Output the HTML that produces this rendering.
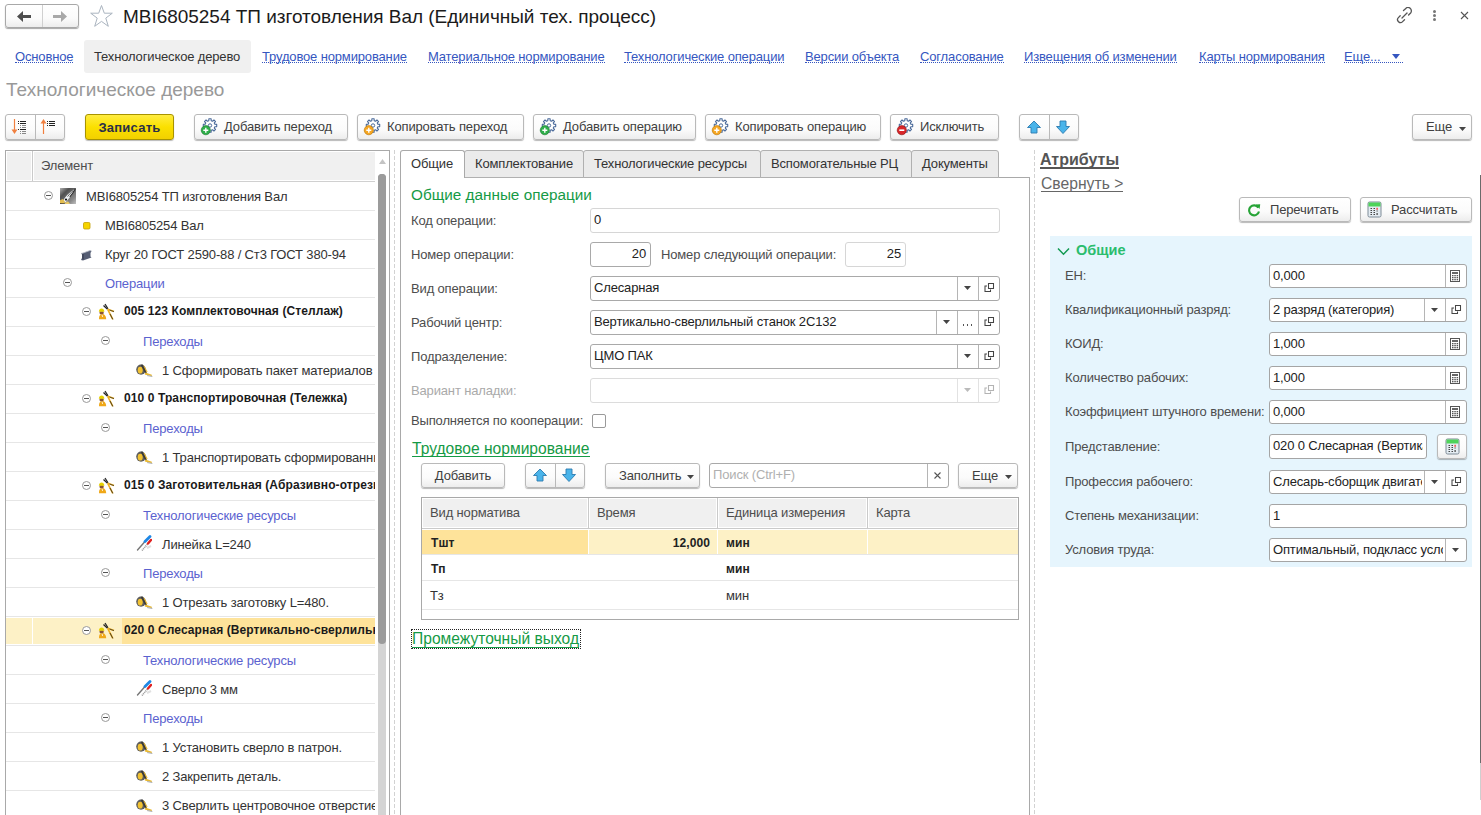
<!DOCTYPE html>
<html><head><meta charset="utf-8">
<style>
*{box-sizing:border-box;margin:0;padding:0}
html,body{width:1481px;height:815px;overflow:hidden;background:#fff}
body{position:relative;font-family:"Liberation Sans",sans-serif;font-size:13px;color:#333;letter-spacing:-0.15px}
.a{position:absolute;white-space:nowrap}
.t{position:absolute;white-space:nowrap;line-height:15px}
.btn{position:absolute;border:1px solid #b9b9b9;border-radius:3px;background:linear-gradient(#ffffff 0%,#fbfbfb 60%,#ededed 100%);box-shadow:0 1px 1px rgba(0,0,0,.28);color:#404040;white-space:nowrap;line-height:24px;height:26px}
.lnk{position:absolute;white-space:nowrap;color:#3556c0;line-height:15px}
.lnk:after{content:"";position:absolute;left:0;right:0;top:13px;border-bottom:1px dotted #3556c0}
.inp{position:absolute;border:1px solid #a9a9a9;border-radius:3px;background:#fff;height:25px;line-height:21px;padding-left:3px;color:#222;white-space:nowrap;overflow:hidden}
.inpl{border-color:#d6d6d6}
.lbl{position:absolute;white-space:nowrap;color:#4d4d4d;line-height:15px}
.sep{position:absolute;top:0;bottom:0;width:1px;background:#a9a9a9}
.row{position:absolute;left:0;width:369px;height:29px;border-bottom:1px solid #e6e6e6}
.tt{position:absolute;white-space:nowrap;line-height:15px;top:7px;color:#333}
.grp{color:#5b62cf}
.b{font-weight:bold;font-size:12px;letter-spacing:0.1px;color:#1a1a1a}
.circ{position:absolute;width:9px;height:9px;border:1px solid #9a9a9a;border-radius:50%;top:9px;background:#fff}
.circ:after{content:"";position:absolute;left:1px;top:3px;width:5px;height:1px;background:#555}
</style></head><body>

<!-- ===== HEADER ===== -->
<div class="btn" style="left:5px;top:4px;width:74px;height:24px;box-shadow:0 1px 1px rgba(0,0,0,.35);border-color:#a8a8a8"></div>
<div class="a" style="left:42px;top:5px;width:1px;height:22px;background:#d0d0d0"></div>
<svg class="a" style="left:17px;top:11px" width="15" height="11" viewBox="0 0 15 11"><path d="M0 5.5 L6 0 L6 4 L14 4 L14 7 L6 7 L6 11 Z" fill="#4d4d4d"/></svg>
<svg class="a" style="left:53px;top:11px" width="15" height="11" viewBox="0 0 15 11"><path d="M14 5.5 L8 0 L8 4 L0 4 L0 7 L8 7 L8 11 Z" fill="#a8a8a8"/></svg>
<svg class="a" style="left:89px;top:4px" width="25" height="24" viewBox="0 0 25 24"><path d="M12.5 1.5 L15.3 9.2 L23.3 9.2 L16.8 14.1 L19.3 22.3 L12.5 17.4 L5.7 22.3 L8.2 14.1 L1.7 9.2 L9.7 9.2 Z" fill="none" stroke="#aab4bf" stroke-width="1"/></svg>
<div class="a" style="left:123px;top:6px;font-size:19px;line-height:22px;letter-spacing:-0.03px;color:#1b1b1b">MBI6805254 ТП изготовления Вал (Единичный тех. процесс)</div>

<svg class="a" style="left:1396px;top:7px" width="17" height="17" viewBox="0 0 17 17"><g fill="none" stroke="#555" stroke-width="1.3" stroke-linecap="round"><path d="M7.5 3.5 L9.5 1.8 A2.9 2.9 0 0 1 14.6 6 L12.6 8"/><path d="M4.2 8.8 L2.4 10.6 A2.9 2.9 0 0 0 6.6 14.6 L8.5 12.8"/><path d="M6 11 L11 6"/></g></svg>
<div class="a" style="left:1433px;top:10px;width:3px;height:3px;border-radius:50%;background:#777"></div>
<div class="a" style="left:1433px;top:14px;width:3px;height:3px;border-radius:50%;background:#777"></div>
<div class="a" style="left:1433px;top:18px;width:3px;height:3px;border-radius:50%;background:#777"></div>
<svg class="a" style="left:1460px;top:11px" width="9" height="9" viewBox="0 0 9 9"><path d="M1 1 L8 8 M8 1 L1 8" stroke="#555" stroke-width="1.1"/></svg>

<!-- ===== NAV ===== -->
<div class="a" style="left:84px;top:40px;width:167px;height:33px;background:#f0f0f0;border-radius:3px"></div>
<div class="lnk" style="left:15px;top:49px">Основное</div>
<div class="t" style="left:94px;top:49px;color:#333">Технологическое дерево</div>
<div class="lnk" style="left:262px;top:49px">Трудовое нормирование</div>
<div class="lnk" style="left:428px;top:49px">Материальное нормирование</div>
<div class="lnk" style="left:624px;top:49px">Технологические операции</div>
<div class="lnk" style="left:805px;top:49px">Версии объекта</div>
<div class="lnk" style="left:920px;top:49px">Согласование</div>
<div class="lnk" style="left:1024px;top:49px">Извещения об изменении</div>
<div class="lnk" style="left:1199px;top:49px">Карты нормирования</div>
<div class="lnk" style="left:1344px;top:49px;width:59px">Еще...</div>
<svg class="a" style="left:1392px;top:54px" width="8" height="5" viewBox="0 0 8 5"><path d="M0 0 L8 0 L4 5 Z" fill="#3556c0"/></svg>

<div class="a" style="left:6px;top:79px;font-size:19px;line-height:22px;letter-spacing:0;color:#999">Технологическое дерево</div>

<!-- ===== TOOLBAR ===== -->
<div class="btn" style="left:5px;top:114px;width:60px;height:26px"></div>
<div class="a" style="left:35px;top:115px;width:1px;height:25px;background:#b9b9b9"></div>
<svg class="a" style="left:5px;top:114px" width="60" height="25" viewBox="0 0 60 25">
 <path d="M9.5 5 V18" stroke="#f08040" stroke-width="1.2"/><path d="M6.5 15.5 L12.5 15.5 L9.5 20 Z" fill="#f08040"/>
 <g fill="#222"><rect x="13" y="7" width="1" height="1"/><rect x="15" y="7" width="6" height="1"/><rect x="13" y="9" width="1" height="1"/><rect x="15" y="9" width="6" height="1"/><rect x="13" y="15" width="1" height="1"/><rect x="15" y="15" width="6" height="1"/></g>
 <g fill="#888"><rect x="15" y="11" width="1" height="1"/><rect x="17" y="11" width="4" height="1"/><rect x="15" y="13" width="1" height="1"/><rect x="17" y="13" width="4" height="1"/><rect x="15" y="17" width="1" height="1"/><rect x="17" y="17" width="4" height="1"/><rect x="15" y="19" width="1" height="1"/><rect x="17" y="19" width="4" height="1"/></g>
 <path d="M38.5 8 V20" stroke="#f08040" stroke-width="1.2"/><path d="M35.5 9.5 L41.5 9.5 L38.5 5 Z" fill="#f08040"/>
 <g fill="#222"><rect x="42" y="7" width="1" height="1"/><rect x="44" y="7" width="6" height="1"/><rect x="42" y="9" width="1" height="1"/><rect x="44" y="9" width="6" height="1"/><rect x="42" y="11" width="1" height="1"/><rect x="44" y="11" width="6" height="1"/></g>
</svg>
<div class="btn" style="left:85px;top:114px;width:89px;height:26px;background:linear-gradient(#ffec40 0%,#fbe000 50%,#f2d000 100%);border-color:#a89300;color:#2b2f48;font-weight:bold;text-align:center;line-height:25px;letter-spacing:0.25px">Записать</div>

<div class="btn" style="left:194px;top:114px;width:154px;height:26px;line-height:24px;padding-left:29px">Добавить переход</div>
<div class="btn" style="left:357px;top:114px;width:167px;height:26px;line-height:24px;padding-left:29px">Копировать переход</div>
<div class="btn" style="left:533px;top:114px;width:163px;height:26px;line-height:24px;padding-left:29px">Добавить операцию</div>
<div class="btn" style="left:705px;top:114px;width:176px;height:26px;line-height:24px;padding-left:29px">Копировать операцию</div>
<div class="btn" style="left:890px;top:114px;width:109px;height:26px;line-height:24px;padding-left:29px">Исключить</div>
<svg width="0" height="0" style="position:absolute"><defs>
 <g id="gear"><path d="M8.88 0.79 L11.12 0.79 L11.21 2.65 L12.58 3.22 L13.95 1.97 L15.53 3.55 L14.28 4.92 L14.85 6.29 L16.71 6.38 L16.71 8.62 L14.85 8.71 L14.28 10.08 L15.53 11.45 L13.95 13.03 L12.58 11.78 L11.21 12.35 L11.12 14.21 L8.88 14.21 L8.79 12.35 L7.42 11.78 L6.05 13.03 L4.47 11.45 L5.72 10.08 L5.15 8.71 L3.29 8.62 L3.29 6.38 L5.15 6.29 L5.72 4.92 L4.47 3.55 L6.05 1.97 L7.42 3.22 L8.79 2.65 Z" fill="#fff" stroke="#4a6a9a" stroke-width="1.1" stroke-linejoin="round"/><circle cx="10" cy="7.5" r="1.7" fill="#fff" stroke="#4a6a9a" stroke-width="1"/></g>
</defs></svg>
<svg class="a" style="left:200px;top:118px" width="20" height="18" viewBox="0 0 20 18"><use href="#gear"/><circle cx="5.8" cy="12.2" r="4.6" fill="#2fae4a" stroke="#1c7a30" stroke-width="0.6"/><path d="M5.8 9.7 V14.7 M3.3 12.2 H8.3" stroke="#fff" stroke-width="1.4"/></svg>
<svg class="a" style="left:363px;top:118px" width="20" height="18" viewBox="0 0 20 18"><use href="#gear"/><circle cx="5.8" cy="12.2" r="4.6" fill="#f5a623" stroke="#b87400" stroke-width="0.6"/><path d="M5.8 9.7 V14.7 M3.3 12.2 H8.3" stroke="#fff" stroke-width="1.4"/></svg>
<svg class="a" style="left:539px;top:118px" width="20" height="18" viewBox="0 0 20 18"><use href="#gear"/><circle cx="5.8" cy="12.2" r="4.6" fill="#2fae4a" stroke="#1c7a30" stroke-width="0.6"/><path d="M5.8 9.7 V14.7 M3.3 12.2 H8.3" stroke="#fff" stroke-width="1.4"/></svg>
<svg class="a" style="left:711px;top:118px" width="20" height="18" viewBox="0 0 20 18"><use href="#gear"/><circle cx="5.8" cy="12.2" r="4.6" fill="#f5a623" stroke="#b87400" stroke-width="0.6"/><path d="M5.8 9.7 V14.7 M3.3 12.2 H8.3" stroke="#fff" stroke-width="1.4"/></svg>
<svg class="a" style="left:896px;top:118px" width="20" height="18" viewBox="0 0 20 18"><use href="#gear"/><circle cx="5.8" cy="12.2" r="4.6" fill="#d9262a" stroke="#8a1010" stroke-width="0.6"/><path d="M3.3 12.2 H8.3" stroke="#fff" stroke-width="1.6"/></svg>

<div class="btn" style="left:1019px;top:114px;width:60px;height:26px"></div>
<div class="a" style="left:1049px;top:115px;width:1px;height:25px;background:#b9b9b9"></div>
<svg class="a" style="left:1026px;top:120px" width="16" height="15" viewBox="0 0 16 15"><path d="M8 1 L14.5 7.5 L11 7.5 L11 13 L5 13 L5 7.5 L1.5 7.5 Z" fill="#4ab4ea" stroke="#2a7ab0" stroke-width="0.9" stroke-linejoin="round"/></svg>
<svg class="a" style="left:1055px;top:120px" width="16" height="15" viewBox="0 0 16 15"><path d="M8 13.5 L14.5 6.5 L11 6.5 L11 1 L5 1 L5 6.5 L1.5 6.5 Z" fill="#4ab4ea" stroke="#2a7ab0" stroke-width="0.9" stroke-linejoin="round"/></svg>

<div class="btn" style="left:1412px;top:114px;width:60px;height:26px;line-height:24px;padding-left:13px">Еще</div>
<svg class="a" style="left:1459px;top:127px" width="7" height="4" viewBox="0 0 7 4"><path d="M0 0 L7 0 L3.5 4 Z" fill="#444"/></svg>

<svg width="0" height="0" style="position:absolute"><defs>
 <linearGradient id="gproc" x1="0" y1="0" x2="1" y2="1"><stop offset="0" stop-color="#b0b0b0"/><stop offset="0.3" stop-color="#505050"/><stop offset="0.75" stop-color="#8a8a8a"/><stop offset="1" stop-color="#c0c0c0"/></linearGradient>
 <g id="i-proc"><rect x="0" y="0" width="16" height="16" fill="url(#gproc)"/><path d="M2.5 13.5 C5 9 9.5 4 15.3 0.8 C13.5 5 9.5 10 5.5 14.5 Z" fill="#eef1f3"/><path d="M15.3 0.8 C13.5 4.5 11.5 7 9.8 8.8" stroke="#2a2a2a" stroke-width="1.1" fill="none"/><path d="M13.2 2.6 C11 4.5 9 6.5 7.6 8.6" stroke="#444" stroke-width="0.8" fill="none"/><circle cx="6" cy="11.6" r="1.1" fill="#111"/><path d="M0 12.2 L2.8 11 L5.2 14 L3.4 16 L0 16 Z" fill="#e4be50"/><path d="M4.8 15 L8 13.2 L10 16 L4.8 16 Z" fill="#e8c868"/><path d="M0 15.2 L4.5 15.6 L4.5 16 L0 16 Z" fill="#2a2a3a"/></g>
 <g id="i-sq"><rect x="0.5" y="0.5" width="6.5" height="6.5" rx="1.2" fill="#f6d400" stroke="#c4a000" stroke-width="0.8"/></g>
 <g id="i-beam"><path d="M1 3.5 L3 3 L10 0.5 L11.5 1 L10.5 3 L10.5 6.5 L11.5 7.5 L3 10.5 L1 10 L2 8 L2 4.5 Z" fill="#565e74"/><path d="M1 3.5 L3 3 L10 0.5 L11.5 1" stroke="#b8bcc8" stroke-width="0.8" fill="none"/><path d="M3 4 L3 9.5" stroke="#30364a" stroke-width="1"/></g>
 <g id="i-worker"><path d="M1 16.3 C0.8 13 2 11 4.2 11 C6.5 11 8.2 13 8.2 16.3 Z" fill="#f0a818"/><path d="M4 11.5 L4.6 14" stroke="#fff" stroke-width="0.8"/><rect x="1.6" y="8.3" width="4" height="3" rx="1" fill="#8a5434"/><path d="M0.8 8.8 C0.8 4.3 6.4 4.3 6.4 8.8 Z" fill="#e6d200"/><path d="M5.5 2.5 L9.5 6.3" stroke="#222" stroke-width="1.2"/><path d="M7 1 L10 5.8" stroke="#222" stroke-width="1.2"/><path d="M9.7 6.3 L16 8.6" stroke="#f0b020" stroke-width="1.6"/><path d="M11.5 7 L16 8.6" stroke="#222" stroke-width="0.7"/><path d="M9.7 6.3 L14.8 16.4" stroke="#f0b020" stroke-width="1.6"/><path d="M12 11 L14.8 16.4" stroke="#222" stroke-width="0.8"/></g>
 <g id="i-tape"><ellipse cx="5" cy="5.6" rx="4.8" ry="5.1" fill="#5e5e5e"/><ellipse cx="4.2" cy="6.2" rx="2.5" ry="3.4" fill="#f2c232"/><path d="M4.6 0.8 L6.6 0.6 L11 8.4 L9.4 9.4 Z" fill="#3a3a3a"/><path d="M7.3 1.6 L8.6 2.2 L11.6 7.8 L10.6 8.6 Z" fill="#e8b830"/><path d="M9.4 8.6 L15.8 10.8 L15.8 12.2 L8.8 10.6 Z" fill="#e8b830"/><path d="M11.5 11 L16.5 12 L16.2 13 L10.8 12 Z" fill="#aeb0b4"/></g>
 <g id="i-tool"><path d="M2.5 15 L10 6.5" stroke="#777" stroke-width="1.4" stroke-linecap="round"/><path d="M10 6.5 L15 1.5" stroke="#1e88e5" stroke-width="2.8" stroke-linecap="round"/><path d="M7 15.5 L13 8.5" stroke="#999" stroke-width="1.6" stroke-dasharray="1 0.8"/><path d="M13 8.5 L16 5" stroke="#e02020" stroke-width="2.4" stroke-linecap="round"/><path d="M12 13 L16 11" stroke="#e0e0e0" stroke-width="2"/></g>
 <g id="i-open"><path d="M4.5 1.5 H9.5 V6.5 H4.5 Z" fill="none" stroke="#444" stroke-width="1.05"/><path d="M3 4 H1 V9.5 H6.5 V7.5" fill="none" stroke="#444" stroke-width="1.05"/></g>
 <g id="i-calc"><rect x="1" y="1" width="13" height="15" rx="1.5" fill="#e4ecf2" stroke="#7d8a96" stroke-width="1"/><rect x="1.5" y="1.5" width="12" height="4" fill="#4fd35a"/><g fill="#444"><rect x="3.5" y="7" width="1.5" height="1"/><rect x="6.5" y="7" width="1.5" height="1"/><rect x="3.5" y="9" width="1.5" height="1"/><rect x="6.5" y="9" width="1.5" height="1"/><rect x="3.5" y="11" width="1.5" height="1"/><rect x="6.5" y="11" width="1.5" height="1"/><rect x="3.5" y="13" width="1.5" height="1"/><rect x="6.5" y="13" width="1.5" height="1"/><rect x="9.5" y="9.5" width="1.2" height="1"/><rect x="9.5" y="12" width="1.2" height="2"/></g><rect x="9.5" y="6.8" width="1.2" height="2" fill="#f22"/></g>
 <g id="i-minicalc"><rect x="0.5" y="0.5" width="9" height="11" fill="none" stroke="#555" stroke-width="1"/><rect x="2" y="2" width="6" height="2" fill="#666"/><g fill="#555"><rect x="2" y="5" width="1.5" height="1.3"/><rect x="4.3" y="5" width="1.5" height="1.3"/><rect x="6.6" y="5" width="1.5" height="1.3"/><rect x="2" y="7" width="1.5" height="1.3"/><rect x="4.3" y="7" width="1.5" height="1.3"/><rect x="6.6" y="7" width="1.5" height="1.3"/><rect x="2" y="9" width="1.5" height="1.3"/><rect x="4.3" y="9" width="1.5" height="1.3"/><rect x="6.6" y="9" width="1.5" height="1.3"/></g></g>
</defs></svg>

<!-- ===== TREE ===== -->
<div class="a" style="left:5px;top:150px;width:385px;height:700px;border:1px solid #a9a9a9;background:#fff"></div>
<div class="a" style="left:7px;top:152px;width:24px;height:28px;background:#f0f0f0"></div>
<div class="a" style="left:32px;top:151px;width:1px;height:30px;background:#cacaca"></div>
<div class="a" style="left:34px;top:152px;width:341px;height:28px;background:#f0f0f0"></div>
<div class="a" style="left:6px;top:181px;width:369px;height:1px;background:#d0d0d0"></div>
<div class="t" style="left:41px;top:158px;color:#4d4d4d">Элемент</div>
<div class="a" style="left:6px;top:182px;width:369px;height:640px;overflow:hidden">
<div class="row" style="top:0px"><div class="circ" style="left:38px"></div><svg class="a" style="left:54px;top:6px" width="16" height="16"><use href="#i-proc"/></svg><div class="tt " style="left:80px">MBI6805254 ТП изготовления Вал</div></div>
<div class="row" style="top:29px"><svg class="a" style="left:77px;top:11px" width="8" height="8"><use href="#i-sq"/></svg><div class="tt " style="left:99px">MBI6805254 Вал</div></div>
<div class="row" style="top:58px"><svg class="a" style="left:74px;top:10px" width="12" height="11"><use href="#i-beam"/></svg><div class="tt " style="left:99px">Круг 20 ГОСТ 2590-88 / Ст3 ГОСТ 380-94</div></div>
<div class="row" style="top:87px"><div class="circ" style="left:57px"></div><div class="tt grp" style="left:99px">Операции</div></div>
<div class="row" style="top:116px"><div class="circ" style="left:76px"></div><svg class="a" style="left:92px;top:5px" width="17" height="17"><use href="#i-worker"/></svg><div class="tt b" style="left:118px;top:6px">005 123 Комплектовочная (Стеллаж)</div></div>
<div class="row" style="top:145px"><div class="circ" style="left:95px"></div><div class="tt grp" style="left:137px">Переходы</div></div>
<div class="row" style="top:174px"><svg class="a" style="left:130px;top:8px" width="17" height="13"><use href="#i-tape"/></svg><div class="tt " style="left:156px">1 Сформировать пакет материалов для изготовления</div></div>
<div class="row" style="top:203px"><div class="circ" style="left:76px"></div><svg class="a" style="left:92px;top:5px" width="17" height="17"><use href="#i-worker"/></svg><div class="tt b" style="left:118px;top:6px">010 0 Транспортировочная (Тележка)</div></div>
<div class="row" style="top:232px"><div class="circ" style="left:95px"></div><div class="tt grp" style="left:137px">Переходы</div></div>
<div class="row" style="top:261px"><svg class="a" style="left:130px;top:8px" width="17" height="13"><use href="#i-tape"/></svg><div class="tt " style="left:156px">1 Транспортировать сформированный пакет</div></div>
<div class="row" style="top:290px"><div class="circ" style="left:76px"></div><svg class="a" style="left:92px;top:5px" width="17" height="17"><use href="#i-worker"/></svg><div class="tt b" style="left:118px;top:6px">015 0 Заготовительная (Абразивно-отрезная)</div></div>
<div class="row" style="top:319px"><div class="circ" style="left:95px"></div><div class="tt grp" style="left:137px">Технологические ресурсы</div></div>
<div class="row" style="top:348px"><svg class="a" style="left:129px;top:5px" width="17" height="17"><use href="#i-tool"/></svg><div class="tt " style="left:156px">Линейка L=240</div></div>
<div class="row" style="top:377px"><div class="circ" style="left:95px"></div><div class="tt grp" style="left:137px">Переходы</div></div>
<div class="row" style="top:406px"><svg class="a" style="left:130px;top:8px" width="17" height="13"><use href="#i-tape"/></svg><div class="tt " style="left:156px">1 Отрезать заготовку L=480.</div></div>
<div class="row" style="top:435px"><div class="a" style="left:0;top:1px;width:26px;height:26px;background:#fdf1c6"></div><div class="a" style="left:27px;top:1px;width:89px;height:26px;background:#fdf1c6"></div><div class="a" style="left:116px;top:1px;width:260px;height:26px;background:#fee39a"></div><div class="circ" style="left:76px"></div><svg class="a" style="left:92px;top:5px" width="17" height="17"><use href="#i-worker"/></svg><div class="tt b" style="left:118px;top:6px">020 0 Слесарная (Вертикально-сверлильная)</div></div>
<div class="row" style="top:464px"><div class="circ" style="left:95px"></div><div class="tt grp" style="left:137px">Технологические ресурсы</div></div>
<div class="row" style="top:493px"><svg class="a" style="left:129px;top:5px" width="17" height="17"><use href="#i-tool"/></svg><div class="tt " style="left:156px">Сверло 3 мм</div></div>
<div class="row" style="top:522px"><div class="circ" style="left:95px"></div><div class="tt grp" style="left:137px">Переходы</div></div>
<div class="row" style="top:551px"><svg class="a" style="left:130px;top:8px" width="17" height="13"><use href="#i-tape"/></svg><div class="tt " style="left:156px">1 Установить сверло в патрон.</div></div>
<div class="row" style="top:580px"><svg class="a" style="left:130px;top:8px" width="17" height="13"><use href="#i-tape"/></svg><div class="tt " style="left:156px">2 Закрепить деталь.</div></div>
<div class="row" style="top:609px"><svg class="a" style="left:130px;top:8px" width="17" height="13"><use href="#i-tape"/></svg><div class="tt " style="left:156px">3 Сверлить центровочное отверстие</div></div>
</div>
<svg class="a" style="left:379px;top:159px" width="7" height="5"><path d="M0 5 L3.5 0 L7 5 Z" fill="#c4c4c4"/></svg>
<div class="a" style="left:378px;top:174px;width:8px;height:470px;background:#9b9b9b;border-radius:4px"></div>
<div class="a" style="left:378px;top:640px;width:8px;height:180px;background:#d4d4d4"></div>
<div class="a" style="left:378px;top:174px;width:8px;height:470px;background:#9b9b9b;border-radius:4px 4px 4px 4px"></div>
<!-- ===== SPLITTERS ===== -->
<div class="a" style="left:394px;top:150px;width:1px;height:670px;background:repeating-linear-gradient(#d2d2d2 0 4px,transparent 4px 6px)"></div>
<div class="a" style="left:1034px;top:150px;width:1px;height:670px;background:repeating-linear-gradient(#d2d2d2 0 4px,transparent 4px 6px)"></div>

<!-- ===== TABS ===== -->
<div class="a" style="left:400px;top:177px;width:630px;height:700px;border:1px solid #a9a9a9;background:#fff"></div>
<div class="a" style="left:464px;top:150px;width:120px;height:28px;border:1px solid #b0b0b0;border-radius:3px 3px 0 0;background:#ebebeb"></div>
<div class="a" style="left:583px;top:150px;width:178px;height:28px;border:1px solid #b0b0b0;border-radius:3px 3px 0 0;background:#ebebeb"></div>
<div class="a" style="left:760px;top:150px;width:152px;height:28px;border:1px solid #b0b0b0;border-radius:3px 3px 0 0;background:#ebebeb"></div>
<div class="a" style="left:911px;top:150px;width:88px;height:28px;border:1px solid #b0b0b0;border-radius:3px 3px 0 0;background:#ebebeb"></div>
<div class="a" style="left:400px;top:150px;width:65px;height:28px;border:1px solid #a9a9a9;border-bottom:none;border-radius:3px 3px 0 0;background:#fff"></div>
<div class="t" style="left:411px;top:156px">Общие</div>
<div class="t" style="left:475px;top:156px">Комплектование</div>
<div class="t" style="left:594px;top:156px">Технологические ресурсы</div>
<div class="t" style="left:771px;top:156px">Вспомогательные РЦ</div>
<div class="t" style="left:922px;top:156px">Документы</div>

<div class="a" style="left:411px;top:186px;font-size:15.3px;line-height:18px;letter-spacing:0;color:#159a45">Общие данные операции</div>

<div class="lbl" style="left:411px;top:213px">Код операции:</div>
<div class="inp inpl" style="left:590px;top:208px;width:410px">0</div>

<div class="lbl" style="left:411px;top:247px">Номер операции:</div>
<div class="inp" style="left:590px;top:242px;width:61px;text-align:right;padding-right:4px">20</div>
<div class="lbl" style="left:661px;top:247px">Номер следующий операции:</div>
<div class="inp inpl" style="left:845px;top:242px;width:61px;text-align:right;padding-right:4px">25</div>

<div class="lbl" style="left:411px;top:281px">Вид операции:</div>
<div class="inp" style="left:590px;top:276px;width:410px">Слесарная</div>
<div class="a" style="left:957px;top:277px;width:1px;height:23px;background:#b5b5b5"></div>
<div class="a" style="left:978px;top:277px;width:1px;height:23px;background:#b5b5b5"></div>
<svg class="a" style="left:964px;top:286px" width="7" height="4"><path d="M0 0 L7 0 L3.5 4 Z" fill="#444"/></svg>
<svg class="a" style="left:984px;top:282px" width="11" height="11"><use href="#i-open"/></svg>

<div class="lbl" style="left:411px;top:315px">Рабочий центр:</div>
<div class="inp" style="left:590px;top:310px;width:410px">Вертикально-сверлильный станок 2С132</div>
<div class="a" style="left:936px;top:311px;width:1px;height:23px;background:#b5b5b5"></div>
<div class="a" style="left:957px;top:311px;width:1px;height:23px;background:#b5b5b5"></div>
<div class="a" style="left:978px;top:311px;width:1px;height:23px;background:#b5b5b5"></div>
<svg class="a" style="left:943px;top:320px" width="7" height="4"><path d="M0 0 L7 0 L3.5 4 Z" fill="#444"/></svg>
<div class="a" style="left:963px;top:324px;width:9px;height:2px;background:repeating-linear-gradient(90deg,#555 0 1px,transparent 1px 4px)"></div>
<svg class="a" style="left:984px;top:316px" width="11" height="11"><use href="#i-open"/></svg>

<div class="lbl" style="left:411px;top:349px">Подразделение:</div>
<div class="inp" style="left:590px;top:344px;width:410px">ЦМО ПАК</div>
<div class="a" style="left:957px;top:345px;width:1px;height:23px;background:#b5b5b5"></div>
<div class="a" style="left:978px;top:345px;width:1px;height:23px;background:#b5b5b5"></div>
<svg class="a" style="left:964px;top:354px" width="7" height="4"><path d="M0 0 L7 0 L3.5 4 Z" fill="#444"/></svg>
<svg class="a" style="left:984px;top:350px" width="11" height="11"><use href="#i-open"/></svg>

<div class="lbl" style="left:411px;top:383px;color:#aaa">Вариант наладки:</div>
<div class="inp inpl" style="left:590px;top:378px;width:410px;border-color:#dcdcdc"></div>
<div class="a" style="left:957px;top:379px;width:1px;height:23px;background:#e2e2e2"></div>
<div class="a" style="left:978px;top:379px;width:1px;height:23px;background:#e2e2e2"></div>
<svg class="a" style="left:964px;top:388px" width="7" height="4"><path d="M0 0 L7 0 L3.5 4 Z" fill="#bbb"/></svg>
<svg class="a" style="left:984px;top:384px" width="11" height="11" style="opacity:.4"><g opacity="0.4"><use href="#i-open"/></g></svg>

<div class="lbl" style="left:411px;top:413px">Выполняется по кооперации:</div>
<div class="a" style="left:592px;top:414px;width:14px;height:14px;border:1px solid #9a9a9a;border-radius:2px;background:#fff"></div>

<div class="a" style="left:412px;top:440px;font-size:15.6px;line-height:18px;letter-spacing:0;color:#159a45;border-bottom:1px solid #159a45;height:17px">Трудовое нормирование</div>

<div class="btn" style="left:421px;top:463px;width:84px;height:25px;line-height:23px;text-align:center">Добавить</div>
<div class="btn" style="left:525px;top:463px;width:60px;height:25px"></div>
<div class="a" style="left:555px;top:464px;width:1px;height:24px;background:#b9b9b9"></div>
<svg class="a" style="left:532px;top:468px" width="16" height="15" viewBox="0 0 16 15"><path d="M8 1 L14.5 7.5 L11 7.5 L11 13 L5 13 L5 7.5 L1.5 7.5 Z" fill="#4ab4ea" stroke="#2a7ab0" stroke-width="0.9" stroke-linejoin="round"/></svg>
<svg class="a" style="left:561px;top:468px" width="16" height="15" viewBox="0 0 16 15"><path d="M8 13.5 L14.5 6.5 L11 6.5 L11 1 L5 1 L5 6.5 L1.5 6.5 Z" fill="#4ab4ea" stroke="#2a7ab0" stroke-width="0.9" stroke-linejoin="round"/></svg>
<div class="btn" style="left:605px;top:463px;width:95px;height:25px;line-height:23px;padding-left:13px">Заполнить</div>
<svg class="a" style="left:687px;top:475px" width="7" height="4"><path d="M0 0 L7 0 L3.5 4 Z" fill="#444"/></svg>
<div class="inp" style="left:709px;top:463px;width:240px;height:25px;color:#b0b0b0">Поиск (Ctrl+F)</div>
<div class="a" style="left:927px;top:464px;width:1px;height:23px;background:#b5b5b5"></div>
<svg class="a" style="left:934px;top:472px" width="7" height="7"><path d="M0.5 0.5 L6.5 6.5 M6.5 0.5 L0.5 6.5" stroke="#555" stroke-width="1.1"/></svg>
<div class="btn" style="left:958px;top:463px;width:60px;height:25px;line-height:23px;padding-left:13px">Еще</div>
<svg class="a" style="left:1005px;top:475px" width="7" height="4"><path d="M0 0 L7 0 L3.5 4 Z" fill="#444"/></svg>

<!-- table -->
<div class="a" style="left:421px;top:497px;width:598px;height:123px;border:1px solid #a9a9a9;background:#fff;overflow:hidden">
 <div class="a" style="left:1px;top:1px;width:164px;height:28px;background:#f0f0f0"></div>
 <div class="a" style="left:166px;top:0;width:1px;height:30px;background:#cacaca"></div>
 <div class="a" style="left:168px;top:1px;width:126px;height:28px;background:#f0f0f0"></div>
 <div class="a" style="left:295px;top:0;width:1px;height:30px;background:#cacaca"></div>
 <div class="a" style="left:297px;top:1px;width:147px;height:28px;background:#f0f0f0"></div>
 <div class="a" style="left:445px;top:0;width:1px;height:30px;background:#cacaca"></div>
 <div class="a" style="left:447px;top:1px;width:148px;height:28px;background:#f0f0f0"></div>
 <div class="a" style="left:0;top:30px;width:600px;height:1px;background:#cacaca"></div>
 <div class="t" style="left:8px;top:7px;color:#4d4d4d">Вид норматива</div>
 <div class="t" style="left:175px;top:7px;color:#4d4d4d">Время</div>
 <div class="t" style="left:304px;top:7px;color:#4d4d4d">Единица измерения</div>
 <div class="t" style="left:454px;top:7px;color:#4d4d4d">Карта</div>
 <div class="a" style="left:0;top:32px;width:166px;height:24px;background:#fee39a"></div>
 <div class="a" style="left:167px;top:32px;width:440px;height:24px;background:#fdf1c6"></div>
 <div class="a" style="left:295px;top:32px;width:1px;height:24px;background:#fff"></div>
 <div class="a" style="left:445px;top:32px;width:1px;height:24px;background:#fff"></div>
 <div class="a" style="left:0;top:56px;width:600px;height:1px;background:#e6e6e6"></div>
 <div class="a" style="left:0;top:82px;width:600px;height:1px;background:#e6e6e6"></div>
 <div class="a" style="left:0;top:111px;width:600px;height:1px;background:#e6e6e6"></div>
 <div class="t b" style="left:9px;top:38px;color:#222">Тшт</div>
 <div class="t b" style="left:175px;top:38px;width:113px;text-align:right;color:#222">12,000</div>
 <div class="t b" style="left:304px;top:38px;color:#222">мин</div>
 <div class="t b" style="left:9px;top:64px;color:#222">Тп</div>
 <div class="t b" style="left:304px;top:64px;color:#222">мин</div>
 <div class="t" style="left:8px;top:90px;color:#333">Тз</div>
 <div class="t" style="left:304px;top:90px;color:#333">мин</div>
</div>

<div class="a" style="left:411px;top:629px;width:170px;height:20px;border:1px dotted #222"></div>
<div class="a" style="left:412px;top:630px;font-size:15.6px;line-height:17px;letter-spacing:0;color:#159a45;border-bottom:1px solid #159a45;height:18px">Промежуточный выход</div>

<!-- ===== ATTRIBUTES ===== -->
<div class="a" style="left:1040px;top:150px;font-size:16px;font-weight:bold;line-height:19px;letter-spacing:0;color:#555;border-bottom:2px solid #555;height:19px">Атрибуты</div>
<div class="a" style="left:1041px;top:175px;font-size:15.7px;line-height:18px;letter-spacing:0;color:#666;border-bottom:1px solid #666;height:17px">Свернуть &gt;</div>

<div class="btn" style="left:1239px;top:197px;width:112px;height:25px;line-height:23px;padding-left:30px">Перечитать</div>
<svg class="a" style="left:1247px;top:203px" width="14" height="14" viewBox="0 0 14 14"><path d="M11.3 4.6 A5 5 0 1 0 12 8.5" fill="none" stroke="#27a437" stroke-width="2.1"/><path d="M8.6 1.6 L13.2 1.2 L12.6 6 Z" fill="#27a437"/></svg>
<div class="btn" style="left:1360px;top:197px;width:112px;height:25px;line-height:23px;padding-left:30px">Рассчитать</div>
<svg class="a" style="left:1367px;top:201px" width="15" height="17" viewBox="0 0 15 17"><use href="#i-calc"/></svg>

<div class="a" style="left:1050px;top:236px;width:422px;height:331px;background:#e6f5fd"></div>
<svg class="a" style="left:1057px;top:247px" width="13" height="9" viewBox="0 0 13 9"><path d="M1 1.5 L6.5 7.2 L12 1.5" fill="none" stroke="#139a52" stroke-width="1.5"/></svg>
<div class="a" style="left:1076px;top:242px;font-size:14.5px;font-weight:bold;line-height:17px;letter-spacing:0;color:#2bbd6e">Общие</div>

<div class="lbl" style="left:1065px;top:268px">ЕН:</div>
<div class="inp" style="left:1269px;top:264px;width:198px;height:24px;line-height:21px;border-color:#a5a5a5">0,000</div>
<div class="a" style="left:1445px;top:265px;width:1px;height:22px;background:#b5b5b5"></div>
<svg class="a" style="left:1450px;top:270px" width="11" height="12"><use href="#i-minicalc"/></svg>

<div class="lbl" style="left:1065px;top:302px">Квалификационный разряд:</div>
<div class="inp" style="left:1269px;top:298px;width:198px;height:24px;line-height:21px;border-color:#a5a5a5">2 разряд (категория)</div>
<div class="a" style="left:1424px;top:299px;width:1px;height:22px;background:#b5b5b5"></div>
<div class="a" style="left:1445px;top:299px;width:1px;height:22px;background:#b5b5b5"></div>
<svg class="a" style="left:1431px;top:308px" width="7" height="4"><path d="M0 0 L7 0 L3.5 4 Z" fill="#444"/></svg>
<svg class="a" style="left:1451px;top:304px" width="11" height="11"><use href="#i-open"/></svg>

<div class="lbl" style="left:1065px;top:336px">КОИД:</div>
<div class="inp" style="left:1269px;top:332px;width:198px;height:24px;line-height:21px;border-color:#a5a5a5">1,000</div>
<div class="a" style="left:1445px;top:333px;width:1px;height:22px;background:#b5b5b5"></div>
<svg class="a" style="left:1450px;top:338px" width="11" height="12"><use href="#i-minicalc"/></svg>

<div class="lbl" style="left:1065px;top:370px">Количество рабочих:</div>
<div class="inp" style="left:1269px;top:366px;width:198px;height:24px;line-height:21px;border-color:#a5a5a5">1,000</div>
<div class="a" style="left:1445px;top:367px;width:1px;height:22px;background:#b5b5b5"></div>
<svg class="a" style="left:1450px;top:372px" width="11" height="12"><use href="#i-minicalc"/></svg>

<div class="lbl" style="left:1065px;top:404px">Коэффициент штучного времени:</div>
<div class="inp" style="left:1269px;top:400px;width:198px;height:24px;line-height:21px;border-color:#a5a5a5">0,000</div>
<div class="a" style="left:1445px;top:401px;width:1px;height:22px;background:#b5b5b5"></div>
<svg class="a" style="left:1450px;top:406px" width="11" height="12"><use href="#i-minicalc"/></svg>

<div class="lbl" style="left:1065px;top:439px">Представление:</div>
<div class="inp" style="left:1269px;top:434px;width:158px;height:25px;line-height:21px;border-color:#a5a5a5"><div style="width:150px;overflow:hidden">020 0 Слесарная (Вертикально-сверлильная)</div></div>
<div class="btn" style="left:1437px;top:434px;width:30px;height:25px"></div>
<svg class="a" style="left:1445px;top:438px" width="15" height="17" viewBox="0 0 15 17"><use href="#i-calc"/></svg>

<div class="lbl" style="left:1065px;top:474px">Профессия рабочего:</div>
<div class="inp" style="left:1269px;top:470px;width:198px;height:24px;line-height:21px;border-color:#a5a5a5"><div style="width:149px;overflow:hidden">Слесарь-сборщик двигателей</div></div>
<div class="a" style="left:1424px;top:471px;width:1px;height:22px;background:#b5b5b5"></div>
<div class="a" style="left:1445px;top:471px;width:1px;height:22px;background:#b5b5b5"></div>
<svg class="a" style="left:1431px;top:480px" width="7" height="4"><path d="M0 0 L7 0 L3.5 4 Z" fill="#444"/></svg>
<svg class="a" style="left:1451px;top:476px" width="11" height="11"><use href="#i-open"/></svg>

<div class="lbl" style="left:1065px;top:508px">Степень механизации:</div>
<div class="inp" style="left:1269px;top:504px;width:198px;height:24px;line-height:21px;border-color:#a5a5a5">1</div>

<div class="lbl" style="left:1065px;top:542px">Условия труда:</div>
<div class="inp" style="left:1269px;top:538px;width:198px;height:24px;line-height:21px;border-color:#a5a5a5"><div style="width:170px;overflow:hidden">Оптимальный, подкласс условий труда</div></div>
<div class="a" style="left:1445px;top:539px;width:1px;height:22px;background:#b5b5b5"></div>
<svg class="a" style="left:1452px;top:548px" width="7" height="4"><path d="M0 0 L7 0 L3.5 4 Z" fill="#444"/></svg>

<div class="a" style="left:1480px;top:175px;width:1px;height:588px;background:#6a6a6a"></div>
<div class="a" style="left:1480px;top:763px;width:1px;height:37px;background:#cfcfcf"></div>


</body></html>
